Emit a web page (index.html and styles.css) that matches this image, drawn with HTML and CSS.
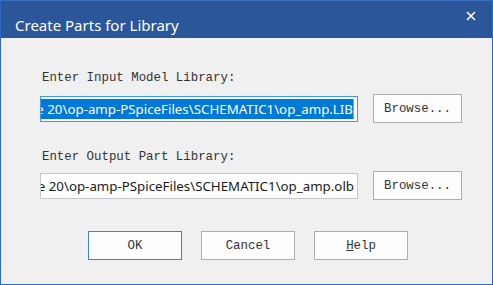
FILE: index.html
```html
<!DOCTYPE html>
<html lang="en">
<head>
    <meta charset="UTF-8">
    <title>Create Parts for Library</title>
    <link rel="stylesheet" href="styles.css">
</head>
<body>
    <div class="dialog">
        <!-- Title bar -->
        <div class="titlebar">
            <span class="title">Create Parts for Library</span>
            <span class="close">
                <svg width="10" height="10" viewBox="0 0 10 10">
                    <path d="M1 1 L9 9 M9 1 L1 9" stroke="#ffffff" stroke-width="1.6" fill="none"/>
                </svg>
            </span>
        </div>

        <!-- Dialog body -->
        <div class="content">
            <div class="label label-first">Enter Input Model Library:</div>
            <div class="row">
                <div class="field field-focus">
                    <span class="value selected">Lecture 20\op-amp-PSpiceFiles\SCHEMATIC1\op_amp.LIB</span><span class="caret"></span>
                </div>
                <button class="btn browse">Browse...</button>
            </div>

            <div class="label label-second">Enter Output Part Library:</div>
            <div class="row">
                <div class="field">
                    <span class="value">Lecture 20\op-amp-PSpiceFiles\SCHEMATIC1\op_amp.olb</span>
                </div>
                <button class="btn browse">Browse...</button>
            </div>

            <div class="actions">
                <button class="btn action default">OK</button>
                <button class="btn action">Cancel</button>
                <button class="btn action"><u>H</u>elp</button>
            </div>
        </div>
    </div>
</body>
</html>
```

FILE: styles.css
```css
/* Reset */
* {
    box-sizing: border-box;
    margin: 0;
    padding: 0;
}

body {
    width: 493px;
    height: 285px;
    overflow: hidden;
    background-color: #ffffff;
}

/* Window frame */
.dialog {
    width: 493px;
    height: 285px;
    border: 1px solid #2b68c4;
    border-top: none;
    background-color: #f0f0f0;
    display: flex;
    flex-direction: column;
}

/* Title bar */
.titlebar {
    height: 38px;
    background-color: #2b579a;
    border-top: 1px solid #3a6fc0;
    display: flex;
    align-items: center;
    justify-content: space-between;
    padding: 4px 16px 0 14px;
}

.title {
    font-family: "Noto Sans", "Open Sans", sans-serif;
    font-size: 15px;
    color: #ffffff;
    margin-top: 7px;
}

.close {
    display: flex;
    margin-top: -12px;
}

/* Body */
.content {
    padding: 33px 0 0 39px;
    display: flex;
    flex-direction: column;
}

.label {
    font-family: "Liberation Mono", "DejaVu Sans Mono", monospace;
    font-size: 12.4px;
    line-height: 14px;
    color: #333333;
    padding-left: 2px;
}

.label-first {
    margin-bottom: 9px;
}

.label-second {
    margin-top: 27px;
    margin-bottom: 7px;
}

.row {
    display: flex;
    align-items: center;
    gap: 15px;
}

/* Text fields */
.field {
    width: 318px;
    height: 26px;
    border: 1px solid #c8c8c8;
    background-color: #ffffff;
    display: flex;
    align-items: center;
    justify-content: flex-end;
    overflow: hidden;
    white-space: nowrap;
    padding: 0 3px 0 2px;
}

.field-focus {
    border-color: #3399ff;
}

.value {
    font-family: "Noto Sans", "Open Sans", sans-serif;
    font-size: 13.3px;
    line-height: 20px;
    color: #1a1a1a;
    flex-shrink: 0;
}

.value.selected {
    background-color: #0078d7;
    color: #ffffff;
}

.caret {
    width: 1px;
    height: 20px;
    background-color: #ff8a1a;
    flex-shrink: 0;
}

/* Buttons */
.btn {
    font-family: "Liberation Mono", "DejaVu Sans Mono", monospace;
    font-size: 12.4px;
    color: #333333;
    background-color: #fdfdfd;
    border: 1px solid #adadad;
    height: 29px;
}

.browse {
    width: 89px;
}

.actions {
    display: flex;
    gap: 19px;
    margin-top: 31px;
    padding-left: 48px;
}

.action {
    width: 94px;
}

.action.default {
    border-color: #3b82d9;
}
```
